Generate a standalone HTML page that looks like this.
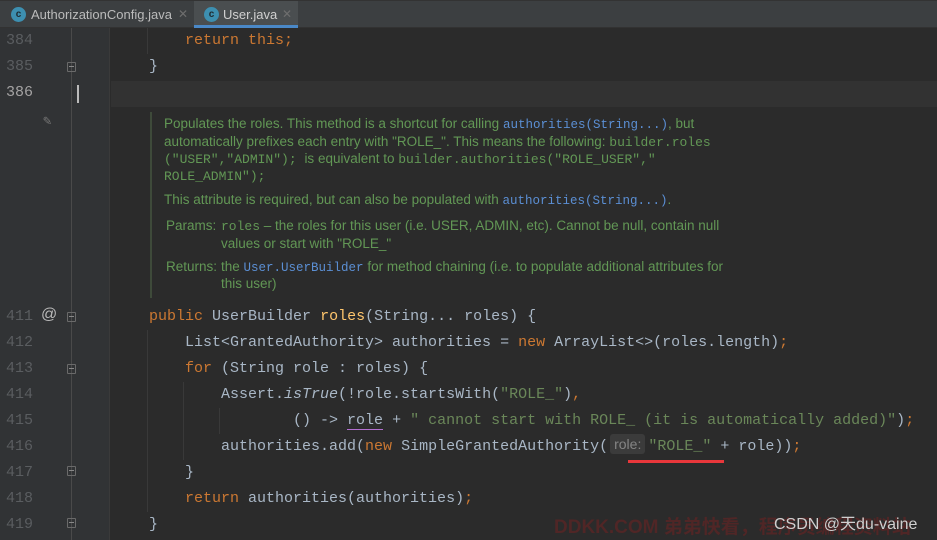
<!DOCTYPE html>
<html><head><meta charset="utf-8"><style>
*{margin:0;padding:0;box-sizing:border-box}
body{width:937px;height:540px;background:#2b2b2b;overflow:hidden;position:relative;font-family:"Liberation Mono",monospace}
.tabs{position:absolute;left:0;top:0;width:937px;height:28px;background:#3c3f41;border-top:1px solid #333;border-bottom:1px solid #323232}
.tab{position:absolute;top:0;height:27px;font:13px "Liberation Sans",sans-serif;color:#bbbbbb;line-height:27px}
.ic{position:absolute;top:6px;width:15px;height:15px;border-radius:50%;background:#3d8fb0;color:#1e2a30;font:bold 10px "Liberation Sans",sans-serif;text-align:center;line-height:15px}
.x{color:#6e6e6e;font-size:12px}
.gut{position:absolute;left:0;top:28px;width:110px;height:512px;background:#313335;border-right:1px solid #3a3a3a}
.fl{position:absolute;left:71px;top:28px;width:1px;height:512px;background:#4a4a4a}
.ln{position:absolute;left:6px;width:30px;font:15px "Liberation Mono",monospace;color:#5a5d60;line-height:26px}
.c{position:absolute;left:113px;font:15px "Liberation Mono",monospace;color:#a9b7c6;line-height:26px;white-space:pre}
.k{color:#cc7832}.s{color:#6a8759}.m{color:#ffc66d}.i{font-style:italic}
.g{position:absolute;width:1px;background:#393939}
.fold{position:absolute;left:67px;width:9px;height:10px;border:1px solid #6a6a6a;border-radius:1px}
.fold:after{content:"";position:absolute;left:1px;top:3px;width:5px;height:1px;background:#888}
.doc{position:absolute;left:150px;top:112px;width:620px;height:186px;border-left:2px solid #3e4a3a;font:13.5px "Liberation Sans",sans-serif;color:#629755}
.doc div{position:absolute;white-space:nowrap}
.dm{font:13px "Liberation Mono",monospace}
.dl{font:12.5px "Liberation Mono",monospace;color:#5b8fd4}
</style></head><body>
<div class="tabs">
 <div class="tab" style="left:0;width:192px"><span class="ic" style="left:11px">c</span><span style="position:absolute;left:31px">AuthorizationConfig.java</span><span class="x" style="position:absolute;left:178px">✕</span></div>
 <div class="tab" style="left:194px;width:104px;background:#4a4e50;border-bottom:3px solid #4a88c7"><span class="ic" style="left:10px">c</span><span style="position:absolute;left:29px;color:#d0d0d0">User.java</span><span class="x" style="position:absolute;left:88px">✕</span></div>
</div>
<div class="gut"></div>
<div class="fl"></div>
<div style="position:absolute;left:111px;top:81px;width:826px;height:26px;background:#323232"></div>
<div style="position:absolute;left:77px;top:85px;width:2px;height:18px;background:#bbb"></div>

<div class="ln" style="top:28px">384</div>
<div class="ln" style="top:54px">385</div>
<div class="ln" style="top:80px;color:#a4a3a3">386</div>
<div class="ln" style="top:304px">411</div>
<div class="ln" style="top:330px">412</div>
<div class="ln" style="top:356px">413</div>
<div class="ln" style="top:382px">414</div>
<div class="ln" style="top:408px">415</div>
<div class="ln" style="top:434px">416</div>
<div class="ln" style="top:460px">417</div>
<div class="ln" style="top:486px">418</div>
<div class="ln" style="top:512px">419</div>
<div style="position:absolute;left:41px;top:306px;font:16px 'Liberation Sans',sans-serif;color:#b8b8b8">@</div>
<div style="position:absolute;left:43px;top:113px;color:#777;font-size:14px">✎</div>

<div class="fold" style="top:62px"></div>
<div class="fold" style="top:312px"></div>
<div class="fold" style="top:364px"></div>
<div class="fold" style="top:466px"></div>
<div class="fold" style="top:518px"></div>

<div class="g" style="left:147px;top:28px;height:26px"></div>
<div class="g" style="left:147px;top:330px;height:182px"></div>
<div class="g" style="left:183px;top:382px;height:78px"></div>
<div class="g" style="left:219px;top:408px;height:26px"></div>

<div class="c" style="top:28px">        <span class="k">return this;</span></div>
<div class="c" style="top:54px">    }</div>
<div class="c" style="top:304px">    <span class="k">public </span>UserBuilder <span class="m">roles</span>(String... roles) {</div>
<div class="c" style="top:330px">        List&lt;GrantedAuthority&gt; authorities = <span class="k">new </span>ArrayList&lt;&gt;(roles.length)<span class="k">;</span></div>
<div class="c" style="top:356px">        <span class="k">for </span>(String role : roles) {</div>
<div class="c" style="top:382px">            Assert.<span class="i">isTrue</span>(!role.startsWith(<span class="s">"ROLE_"</span>)<span class="k">,</span></div>
<div class="c" style="top:408px">                    () -&gt; <span style="border-bottom:1px solid #b26fd0">role</span> + <span class="s">" cannot start with ROLE_ (it is automatically added)"</span>)<span class="k">;</span></div>
<div class="c" style="top:434px">            authorities.add(<span class="k">new </span>SimpleGrantedAuthority(<span style="display:inline-block;margin:0 3px 0 2px;padding:0 4px;background:#3b3b3b;border-radius:3px;color:#858585;font:14px 'Liberation Sans',sans-serif;line-height:20px;vertical-align:1px">role:</span><span class="s">"ROLE_"</span> + role))<span class="k">;</span></div>
<div class="c" style="top:460px">        }</div>
<div class="c" style="top:486px">        <span class="k">return </span>authorities(authorities)<span class="k">;</span></div>
<div class="c" style="top:512px">    }</div>
<div style="position:absolute;left:628px;top:460px;width:96px;height:3px;background:#e8373b"></div>

<div class="doc">
 <div style="left:12px;top:4px">Populates the roles. This method is a shortcut for calling <span class="dl">authorities(String...)</span>, but</div>
 <div style="left:12px;top:22px">automatically prefixes each entry with "ROLE_". This means the following: <span class="dm">builder.roles</span></div>
 <div style="left:12px;top:39px"><span class="dm">("USER","ADMIN"); </span> is equivalent to <span class="dm">builder.authorities("ROLE_USER","</span></div>
 <div style="left:12px;top:56px"><span class="dm">ROLE_ADMIN");</span></div>
 <div style="left:12px;top:80px">This attribute is required, but can also be populated with <span class="dl">authorities(String...)</span>.</div>
 <div style="left:14px;top:106px">Params:</div>
 <div style="left:69px;top:106px"><span class="dm">roles</span> – the roles for this user (i.e. USER, ADMIN, etc). Cannot be null, contain null</div>
 <div style="left:69px;top:124px">values or start with "ROLE_"</div>
 <div style="left:14px;top:147px">Returns:</div>
 <div style="left:69px;top:147px">the <span class="dl">User.UserBuilder</span> for method chaining (i.e. to populate additional attributes for</div>
 <div style="left:69px;top:164px">this user)</div>
</div>

<div style="position:absolute;left:554px;top:512px;font:bold 19px 'Liberation Sans','Noto Sans CJK SC',sans-serif;color:rgba(150,30,30,0.35);white-space:nowrap">DDKK.COM 弟弟快看，程序员编程资料站</div>
<div style="position:absolute;left:774px;top:510px;font:16px 'Liberation Sans','Noto Sans CJK SC',sans-serif;color:#cfcfcf;white-space:nowrap">CSDN @天du-vaine</div>
</body></html>
